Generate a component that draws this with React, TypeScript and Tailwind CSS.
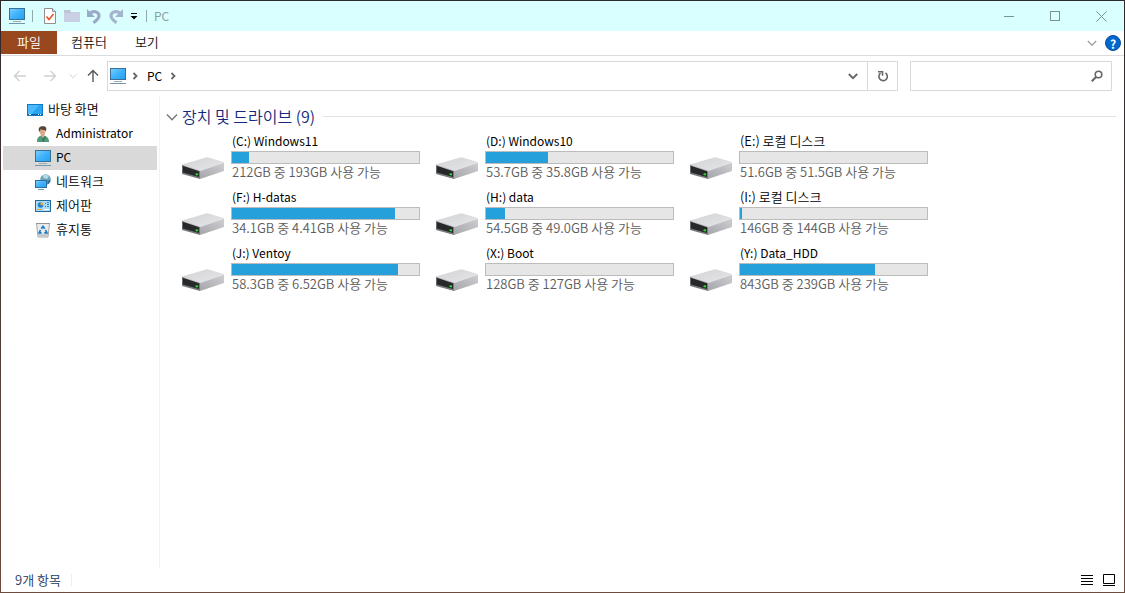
import { useState } from 'react';

type Drive = { name: string; info: string; used: number };

const drives: Drive[] = [
  { name: '(C:) Windows11', info: '212GB 중 193GB 사용 가능', used: 9 },
  { name: '(D:) Windows10', info: '53.7GB 중 35.8GB 사용 가능', used: 33 },
  { name: '(E:) 로컬 디스크', info: '51.6GB 중 51.5GB 사용 가능', used: 0 },
  { name: '(F:) H-datas', info: '34.1GB 중 4.41GB 사용 가능', used: 87 },
  { name: '(H:) data', info: '54.5GB 중 49.0GB 사용 가능', used: 10 },
  { name: '(I:) 로컬 디스크', info: '146GB 중 144GB 사용 가능', used: 1 },
  { name: '(J:) Ventoy', info: '58.3GB 중 6.52GB 사용 가능', used: 89 },
  { name: '(X:) Boot', info: '128GB 중 127GB 사용 가능', used: 0 },
  { name: '(Y:) Data_HDD', info: '843GB 중 239GB 사용 가능', used: 72 },
];

const labelSize = (label: string) => (/[가-힣]/.test(label) ? 'text-[13px] leading-4' : 'text-xs font-normal');

function PcIcon() {
  return (
    <svg width="16" height="16" viewBox="0 0 16 16" aria-hidden="true">
      <defs>
        <linearGradient id="screen" x1="0" y1="0" x2="1" y2="1">
          <stop offset="0" stopColor="#7fd0ff" />
          <stop offset="0.5" stopColor="#3fb2fb" />
          <stop offset="1" stopColor="#22a0f2" />
        </linearGradient>
      </defs>
      <rect x="0.5" y="0.5" width="15" height="11" fill="url(#screen)" stroke="#3b6f94" />
      <path d="M4 13.5h8" stroke="#9aaebb" />
      <path d="M0 15.5h16" stroke="#7995ab" />
    </svg>
  );
}

function DesktopIcon() {
  return (
    <svg width="16" height="16" viewBox="0 0 16 16" aria-hidden="true">
      <rect x="0.5" y="2.5" width="15" height="11" fill="#29a3f3" stroke="#1279c4" />
      <path d="M1 3h11L4 13H1z" fill="#4bbafb" />
      <path d="M1 12.5h14" stroke="#0b5d9c" />
      <path d="M2 12.5h2M11 12.5h1M13 12.5h1" stroke="#e3f4ff" />
    </svg>
  );
}

function UserIcon() {
  return (
    <svg width="16" height="16" viewBox="0 0 16 16" aria-hidden="true">
      <path d="M2 16c0-4 1-5.500 4-6.500h3c3 1 5 2.500 5 6.500z" fill="#4f9a78" />
      <path d="M6 8h3.500v2L8 12.500 6 10z" fill="#d9a684" />
      <path d="M7 11l1 1.500 2-2.500 1 1-2.500 5H7.500z" fill="#37785b" />
      <ellipse cx="7.500" cy="5.300" rx="2.800" ry="3.900" fill="#dba989" />
      <path d="M4.200 5.500C2.600 2 5 .2 7.800.2c3.200 0 4.300 1.800 3 5.300L9.800 4C8 4 6.500 3.600 5.600 2.900L5 5.500z" fill="#554439" />
    </svg>
  );
}

function NetworkIcon() {
  return (
    <svg width="16" height="16" viewBox="0 0 16 16" aria-hidden="true">
      <circle cx="10.500" cy="5.500" r="5.300" fill="#6ea3bd" />
      <path d="M8 1.200c2-.9 4.500-.3 5.800 1.100L12 5 8.500 4z" fill="#b7d9e4" />
      <path d="M12.500 6l3 .5c-.3 2-1.500 3.300-3 4z" fill="#3c6f91" />
      <rect x="0.500" y="6.500" width="11" height="7" fill="url(#screen)" stroke="#2d6f9f" />
      <path d="M3 15.500h6" stroke="#6f95b0" />
    </svg>
  );
}

function ControlPanelIcon() {
  return (
    <svg width="16" height="16" viewBox="0 0 16 16" aria-hidden="true">
      <rect x="0.500" y="2.500" width="15" height="11" fill="#a9dcf8" stroke="#22699f" />
      <circle cx="5.500" cy="7" r="2.800" fill="#1f83cd" />
      <path d="M5.500 7V4.200A2.800 2.800 0 0 1 8.300 7z" fill="#f6ab32" />
      <path d="M10 5.500h1M10 8.500h1M12 4.500h2M12 6.500h2M12 8.500h2" stroke="#2a84c3" />
      <path d="M2 11.500h5" stroke="#ef9a27" />
      <path d="M9 11.500h5" stroke="#fff" />
    </svg>
  );
}

function TrashIcon() {
  return (
    <svg width="16" height="16" viewBox="0 0 16 16" aria-hidden="true">
      <path d="M1.500 1.500h13l-1.500 13.500H3z" fill="#e8ebed" stroke="#a5aaae" />
      <path d="M1 1.500h14" stroke="#8f9599" />
      <path d="M3 12h10l-.4 3H3.400z" fill="#c4c9cc" />
      <path d="M6.300 6.800 8 4.500l1.700 2.300M10.600 8l1.300 2.800H9.300M6.600 10.800H4.200L5.400 8" fill="none" stroke="#1e78c8" strokeWidth="1.700" />
    </svg>
  );
}

function DriveIcon() {
  return (
    <svg width="42" height="24" viewBox="0 0 42 24" className="shrink-0" aria-hidden="true">
      <defs>
        <linearGradient id="driveTop" x1="0" y1="0" x2="1" y2="1">
          <stop offset="0" stopColor="#d2d3d6" />
          <stop offset="1" stopColor="#e6e6e9" />
        </linearGradient>
        <linearGradient id="driveSide" x1="0" y1="1" x2="1" y2="0">
          <stop offset="0" stopColor="#a5a6a9" />
          <stop offset="1" stopColor="#cfcfd3" />
        </linearGradient>
      </defs>
      <path d="M0 8.500 24 1.500Q25 1 26.500 1.500L42 6 18 14.500z" fill="url(#driveTop)" />
      <path d="M18 14.500 42 6v9L18 23z" fill="url(#driveSide)" />
      <path d="M0 8.500 18 14.500V23L0 18z" fill="#77797c" />
      <path d="M0.800 9.800 17 15.200v5.800L0.800 16.500z" fill="#262829" />
      <path d="M0.500 9 18 14.800 42 6.300" fill="none" stroke="#f1f1f3" strokeWidth="0.600" />
      <ellipse cx="14.800" cy="18.300" rx="1.500" ry="1.100" fill="#25dd37" />
    </svg>
  );
}

function Chevron({ down = false, bold = false, size = 10 }: { down?: boolean; bold?: boolean; size?: number }) {
  return (
    <svg width={size} height={size} viewBox="0 0 10 10" fill="none" stroke="currentColor" strokeWidth={bold ? 1.8 : 1.2} aria-hidden="true">
      <path d={down ? 'M.8 3 5 7.200 9.200 3' : 'M3.500 2l3 3-3 3'} />
    </svg>
  );
}

function Arrow({ className }: { className?: string }) {
  return (
    <svg width="14" height="14" viewBox="0 0 14 14" fill="none" stroke="currentColor" strokeWidth="1.400" className={className} aria-hidden="true">
      <path d="M13 7H1.500M6.500 2l-5 5 5 5" />
    </svg>
  );
}

function TitleBar() {
  return (
    <header className="flex h-[30px] items-center bg-[#d9ffff] pl-2 text-[#8b9fa3]">
      <PcIcon />
      <span className="ml-[7px] h-3 w-px bg-[#90a8ac]" />
      <button type="button" aria-label="속성" className="ml-[9px]">
        <svg width="16" height="16" viewBox="0 0 16 16">
          <path d="M2.500.5h8l3 3v12h-11z" fill="#fff" stroke="#8f8f94" />
          <path d="M10.500.5v3h3" fill="#dedee2" stroke="#8f8f94" />
          <path d="M4.500 8.500l2.500 3 4.500-5.500" fill="none" stroke="#ee5423" strokeWidth="1.600" />
        </svg>
      </button>
      <button type="button" aria-label="새 폴더" className="ml-1.5">
        <svg width="16" height="16" viewBox="0 0 16 16">
          <path d="M0 2h6l1 2h9v10H0z" fill="#bdc4d8" />
          <path d="M0 5h6l1-1h9v10H0z" fill="#c9d0e3" />
        </svg>
      </button>
      <button type="button" aria-label="실행 취소" className="ml-1.5">
        <svg width="16" height="16" viewBox="0 0 16 16">
          <path d="M4 5.200c3-2.700 8.500-2 9 2.300.3 3-2 4.500-5.500 7.300" fill="none" stroke="#99a9c8" strokeWidth="3.200" />
          <path d="M1 1v8h8z" fill="#99a9c8" />
        </svg>
      </button>
      <button type="button" aria-label="다시 실행" className="ml-1.5">
        <svg width="16" height="16" viewBox="0 0 16 16">
          <path d="M12 5.200C9 2.500 3.500 3.200 3 7.500c-.3 3 2 4.500 5.500 7.300" fill="none" stroke="#a5b4cd" strokeWidth="3.200" />
          <path d="M15 1v8H7z" fill="#a5b4cd" />
        </svg>
      </button>
      <button type="button" aria-label="빠른 실행 도구 모음 사용자 지정" className="ml-1.5">
        <svg width="8" height="8" viewBox="0 0 8 8">
          <path d="M1 1.500h6" stroke="#000" />
          <path d="M.5 4h7L4 7.500z" />
        </svg>
      </button>
      <span className="ml-2 h-3 w-px bg-[#90a8ac]" />
      <h1 className="ml-[7px] text-xs font-normal">PC</h1>
      <div className="ml-auto flex h-full">
        <button type="button" aria-label="최소화" className="grid w-[46px] place-items-center">
          <svg width="11" height="11"><path d="M0 5.500h10" stroke="#7c9295" /></svg>
        </button>
        <button type="button" aria-label="최대화" className="grid w-[46px] place-items-center">
          <svg width="11" height="11"><rect x=".5" y=".5" width="9" height="9" fill="none" stroke="#7c9295" /></svg>
        </button>
        <button type="button" aria-label="닫기" className="grid w-[46px] place-items-center">
          <svg width="11" height="11"><path d="M.5.5l10 10M10.500.5l-10 10" stroke="#7c9295" /></svg>
        </button>
      </div>
    </header>
  );
}

function RibbonTabs() {
  return (
    <div className="flex h-[25px] items-stretch border-b border-[#dadbdc] text-[#111]">
      <button type="button" className="mb-px w-14 bg-[#99471f] pb-0.5 text-white">파일</button>
      <button type="button" className="px-3.5 pb-[3px]">컴퓨터</button>
      <button type="button" className="px-3.5 pb-[3px]">보기</button>
      <div className="ml-auto flex items-center gap-2 pr-[3px]">
        <button type="button" aria-label="리본 확장" className="text-[#9a9a9a]">
          <Chevron down />
        </button>
        <button type="button" aria-label="도움말" className="grid size-4 place-items-center rounded-full border border-[#0a4f9c] bg-[#0067cf] text-xs font-bold text-white">
          ?
        </button>
      </div>
    </div>
  );
}

function AddressRow() {
  const [query, setQuery] = useState('');

  return (
    <div className="flex items-center px-3 py-[5px]">
      <button type="button" aria-label="뒤로" className="text-[#d0d0d0]"><Arrow /></button>
      <button type="button" aria-label="앞으로" className="ml-4 text-[#d0d0d0]"><Arrow className="rotate-180" /></button>
      <button type="button" aria-label="최근 위치" className="ml-3 text-[#d0d0d0]"><Chevron down size={8} /></button>
      <button type="button" aria-label="위로" className="ml-[9px] text-[#555]"><Arrow className="rotate-90" /></button>
      <div className="ml-[7px] flex h-[30px] flex-1 items-stretch border border-[#d9d9d9]">
        <div className="flex flex-1 items-center pl-0.5 text-[#666]">
          <PcIcon />
          <span className="ml-1"><Chevron bold /></span>
          <a href="#pc" className="ml-[7px] text-xs font-normal text-black">PC</a>
          <span className="ml-1.5"><Chevron bold /></span>
        </div>
        <button type="button" aria-label="이전 위치" className="px-[9px] text-[#666]"><Chevron down bold /></button>
        <button type="button" aria-label="새로 고침" className="grid w-[30px] place-items-center border-l border-[#d9d9d9] text-[#666]">
          <svg width="12" height="12" viewBox="0 0 12 12" fill="none" stroke="currentColor" strokeWidth="1.600">
            <path d="M8.500 3a4.200 4.200 0 1 1-5 .2" />
            <path d="M1 1.800h4.500v4" />
          </svg>
        </button>
      </div>
      <form
        role="search"
        onSubmit={(e) => e.preventDefault()}
        className="ml-3 flex h-[30px] w-[202px] items-center border border-[#d9d9d9] pr-2"
      >
        <input
          type="text"
          value={query}
          onChange={(e) => setQuery(e.target.value)}
          className="h-full min-w-0 flex-1 px-2 outline-none"
          aria-label="PC 검색"
        />
        <button type="submit" aria-label="검색" className="text-[#666]">
          <svg width="12" height="12" viewBox="0 0 12 12" fill="none" stroke="currentColor" strokeWidth="1.600">
            <circle cx="7.500" cy="4.500" r="3.300" />
            <path d="M5 7 .8 11.200" strokeWidth="2" />
          </svg>
        </button>
      </form>
    </div>
  );
}

const children = [
  { label: 'Administrator', icon: <UserIcon /> },
  { label: 'PC', icon: <PcIcon /> },
  { label: '네트워크', icon: <NetworkIcon /> },
  { label: '제어판', icon: <ControlPanelIcon /> },
  { label: '휴지통', icon: <TrashIcon /> },
];

function Sidebar() {
  const [selected, setSelected] = useState('PC');

  return (
    <nav className="w-[159px] shrink-0 border-r border-[#f2f2f2] px-0.5 pt-0.5">
      <button type="button" className="flex h-6 w-full items-center gap-[5px] pl-6">
        <DesktopIcon />
        <span className="pb-0.5">바탕 화면</span>
      </button>
      <ul>
        {children.map(({ label, icon }) => (
          <li key={label}>
            <button
              type="button"
              onClick={() => setSelected(label)}
              className={`flex h-6 w-full items-center gap-[5px] pl-8 ${selected === label ? 'bg-[#d9d9d9]' : ''}`}
            >
              {icon}
              <span className={`pb-0.5 ${labelSize(label)}`}>{label}</span>
            </button>
          </li>
        ))}
      </ul>
    </nav>
  );
}

function DriveTile({ name, info, used }: Drive) {
  return (
    <li className="flex w-[238px] items-end gap-[7px]">
      <DriveIcon />
      <div className="flex-1 leading-4">
        <p className={`pl-px ${labelSize(name)}`}>{name}</p>
        <div role="meter" aria-label={name} aria-valuenow={used} aria-valuemin={0} aria-valuemax={100} className="mt-0.5 h-[13px] border border-[#bcbcbc] bg-[#e6e6e6]">
          <div className="h-full bg-[#26a0da]" style={{ width: `${used}%` }} />
        </div>
        <p className="pl-px text-[#5c5c5c]">{info}</p>
      </div>
    </li>
  );
}

export default function App() {
  return (
    <div className="flex min-h-screen bg-gradient-to-b from-[#2e292b] to-[#6b4c3e] p-px font-['Noto_Sans_CJK_KR',sans-serif] text-[13px] leading-5 font-[350] text-black">
      <div className="flex min-w-0 flex-1 flex-col bg-white">
        <TitleBar />
        <RibbonTabs />
        <AddressRow />
        <div className="flex flex-1">
          <Sidebar />
          <main className="flex-1 pt-2 pr-2 pl-1.5">
            <h2 className="flex h-[25px] items-center text-base font-[350] text-[#12277d]">
              <button type="button" aria-label="그룹 접기" className="mr-1 text-[#777]"><Chevron down size={12} /></button>
              <span className="pb-0.5">장치 및 드라이브 (9)</span>
              <span className="ml-2 h-px flex-1 bg-[#e2e2e2]" />
            </h2>
            <ul className="grid grid-cols-[repeat(auto-fill,254px)] gap-y-[9px] pt-1 pl-4">
              {drives.map((drive) => (
                <DriveTile key={drive.name} {...drive} />
              ))}
            </ul>
          </main>
        </div>
        <footer className="flex h-6 items-center pr-2 pl-3.5 text-[#1e395b]">
          9개 항목
          <span className="ml-2.5 h-3 w-px bg-[#eee]" />
          <div className="ml-auto flex gap-2">
            <button type="button" aria-label="자세히">
              <svg width="14" height="14"><path d="M1 2.500h12M1 5.500h12M1 8.500h12M1 11.500h12" stroke="#000" /></svg>
            </button>
            <button type="button" aria-label="큰 아이콘">
              <svg width="14" height="14"><path d="M1.500 1.500h11v9h-11zM1 12.500h12" fill="none" stroke="#000" /></svg>
            </button>
          </div>
        </footer>
      </div>
    </div>
  );
}
